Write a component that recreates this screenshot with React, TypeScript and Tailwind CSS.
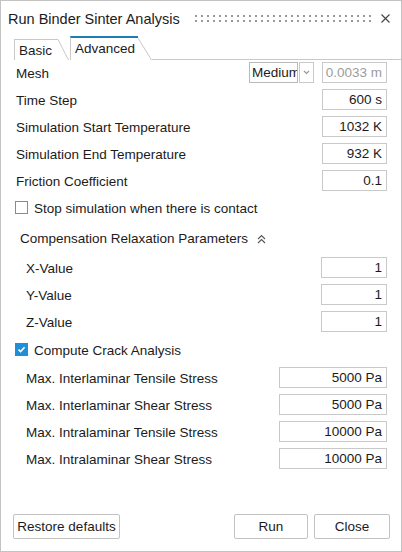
import React from "react";

const Box = ({ value, w, disabled }: { value: string; w: string; disabled?: boolean }) => (
  <div
    className={
      w +
      " h-[21px] border border-[#c9c9c9] bg-white flex items-center justify-end pr-[4px] pt-[1px] text-[13.5px] leading-none " +
      (disabled ? "text-[#9c9c9c]" : "text-[#1b1b1b]")
    }
  >
    {value}
  </div>
);

const Row = ({
  label,
  value,
  h,
  w,
  indent,
}: {
  label: string;
  value: string;
  h: string;
  w: string;
  indent?: boolean;
}) => (
  <div className={h + " flex items-center"}>
    <div className={indent ? "flex-1 pl-[10px] pt-[3px]" : "flex-1 pt-[3px]"}>{label}</div>
    <Box value={value} w={w} />
  </div>
);

const CheckBox = ({ checked }: { checked?: boolean }) =>
  checked ? (
    <div className="w-[13px] h-[13px] bg-[#1f8fd8] flex items-center justify-center">
      <svg width="9" height="9" viewBox="0 0 9 9">
        <path d="M1.5 4.6 L3.6 6.6 L7.6 2.2" fill="none" stroke="white" strokeWidth="1.6" />
      </svg>
    </div>
  ) : (
    <div className="w-[13px] h-[13px] border border-[#8a8a8a] bg-white" />
  );

export default function App() {
  const dots: React.ReactNode[] = [];
  for (let i = 0; i < 30; i++) {
    dots.push(<rect key={"a" + i} x={i * 6} y={0} width={2} height={2} fill="#9a9a9a" />);
    dots.push(<rect key={"b" + i} x={i * 6} y={5} width={2} height={2} fill="#9a9a9a" />);
  }
  return (
    <div className="w-[402px] h-[552px] border border-[#c3c3c3] bg-white flex flex-col text-[13.5px] text-[#1b1b1b] font-['Liberation_Sans',Arial,sans-serif] select-none">
      {/* Title bar */}
      <div className="h-[35px] flex items-center pl-[7px] pr-[11px]">
        <div className="text-[14.5px] text-[#1b1b1b] pt-[3px]">Run Binder Sinter Analysis</div>
        <svg className="ml-auto" width="176" height="7" viewBox="0 0 176 7">
          {dots}
        </svg>
        <svg className="ml-[10px]" width="9" height="9" viewBox="0 0 9 9">
          <path d="M0.5 0.5 L8.5 8.5 M8.5 0.5 L0.5 8.5" stroke="#444" strokeWidth="1.1" />
        </svg>
      </div>

      {/* Tabs */}
      <div className="h-[24px] flex items-end pl-[13px]">
        <div className="w-[44px] h-[21px] border-l border-t border-[#c8c8c8] pl-[4px] pt-[4px] leading-none text-[13.5px]">
          Basic
        </div>
        <svg width="11" height="21" viewBox="0 0 11 21" className="shrink-0">
          <path d="M0 0.5 L10.5 21" stroke="#c8c8c8" strokeWidth="1" fill="none" />
        </svg>
        <div className="w-[1px]" />
        <div className="w-[68px] h-[24px] border-l border-[#c8c8c8] border-t-2 border-t-[#1b7fb3] pl-[4px] pt-[4px] leading-none text-[13.5px]">
          Advanced
        </div>
        <svg width="14" height="24" viewBox="0 0 14 24" className="shrink-0">
          <path d="M0 2 L13.5 24" stroke="#c8c8c8" strokeWidth="1" fill="none" />
        </svg>
        <div className="flex-1 h-[1px] border-b border-[#c8c8c8]" />
      </div>

      {/* Content */}
      <div className="flex-1 flex flex-col pl-[15px] pr-[14px]">
        <div className="h-[25px] flex items-center">
          <div className="flex-1 pt-[3px]">Mesh</div>
          <div className="w-[49px] h-[21px] border border-[#b9b9b9] overflow-hidden whitespace-nowrap pl-[2px] pt-[1px] flex items-center leading-none">
            Medium
          </div>
          <div className="ml-[1px] w-[15px] h-[21px] border border-[#c9c9c9] flex items-center justify-center">
            <svg width="7" height="5" viewBox="0 0 7 5">
              <path d="M1 1 L3.5 3.5 L6 1" fill="none" stroke="#9a9a9a" strokeWidth="1.2" />
            </svg>
          </div>
          <div className="ml-[8px]">
            <Box value="0.0033 m" w="w-[65px]" disabled />
          </div>
        </div>
        <div className="h-[1px]" />
        <Row label="Time Step" value="600 s" h="h-[27px]" w="w-[65px]" />
        <Row label="Simulation Start Temperature" value="1032 K" h="h-[27px]" w="w-[65px]" />
        <Row label="Simulation End Temperature" value="932 K" h="h-[27px]" w="w-[65px]" />
        <Row label="Friction Coefficient" value="0.1" h="h-[27px]" w="w-[65px]" />
        <div className="h-[27px] flex items-center -ml-[1px]">
          <CheckBox />
          <div className="ml-[6px] pt-[3px]">Stop simulation when there is contact</div>
        </div>
        <div className="h-[33px] flex items-center pl-[4px]">
          <div className="pt-[3px]">Compensation Relaxation Parameters</div>
          <svg className="ml-[9px] mt-[2px]" width="9" height="10" viewBox="0 0 9 10">
            <path d="M1 5 L4.5 1.5 L8 5 M1 9 L4.5 5.5 L8 9" fill="none" stroke="#555" strokeWidth="1.1" />
          </svg>
        </div>
        <Row label="X-Value" value="1" h="h-[27px]" w="w-[66px]" indent />
        <Row label="Y-Value" value="1" h="h-[27px]" w="w-[66px]" indent />
        <Row label="Z-Value" value="1" h="h-[27px]" w="w-[66px]" indent />
        <div className="h-[29px] flex items-center -ml-[1px]">
          <CheckBox checked />
          <div className="ml-[6px] pt-[3px]">Compute Crack Analysis</div>
        </div>
        <Row label="Max. Interlaminar Tensile Stress" value="5000 Pa" h="h-[27px]" w="w-[108px]" indent />
        <Row label="Max. Interlaminar Shear Stress" value="5000 Pa" h="h-[27px]" w="w-[108px]" indent />
        <Row label="Max. Intralaminar Tensile Stress" value="10000 Pa" h="h-[27px]" w="w-[108px]" indent />
        <Row label="Max. Intralaminar Shear Stress" value="10000 Pa" h="h-[27px]" w="w-[108px]" indent />
      </div>

      {/* Buttons */}
      <div className="flex items-center pl-[12px] pr-[11px] pb-[12px]">
        <button className="w-[107px] h-[25px] border border-[#c3c3c3] rounded-[2px] bg-white text-[13.5px] text-[#1b1b1b] pt-[1px]">
          Restore defaults
        </button>
        <div className="flex-1" />
        <button className="w-[74px] h-[25px] border border-[#c3c3c3] rounded-[2px] bg-white text-[13.5px] text-[#1b1b1b] pt-[1px]">
          Run
        </button>
        <button className="ml-[6px] w-[76px] h-[25px] border border-[#c3c3c3] rounded-[2px] bg-white text-[13.5px] text-[#1b1b1b] pt-[1px]">
          Close
        </button>
      </div>
    </div>
  );
}
